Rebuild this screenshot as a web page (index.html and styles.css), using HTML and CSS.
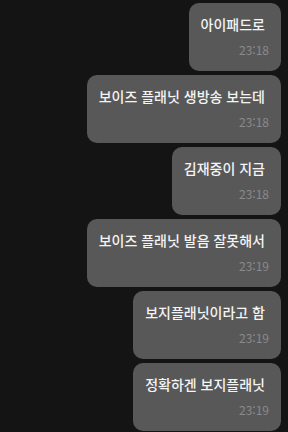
FILE: index.html
```html
<!DOCTYPE html>
<html lang="ko">
<head>
    <meta charset="UTF-8">
    <title>채팅</title>

    <link rel="stylesheet" href="styles.css">
</head>
<body>
<div id="chat">
    <div class="bubble">
        <div class="msg">아이패드로</div>
        <div class="time">23:18</div>
    </div>
    <div class="bubble">
        <div class="msg">보이즈 플래닛 생방송 보는데</div>
        <div class="time">23:18</div>
    </div>
    <div class="bubble">
        <div class="msg">김재중이 지금</div>
        <div class="time">23:18</div>
    </div>
    <div class="bubble">
        <div class="msg">보이즈 플래닛 발음 잘못해서</div>
        <div class="time">23:19</div>
    </div>
    <div class="bubble">
        <div class="msg">보지플래닛이라고 함</div>
        <div class="time">23:19</div>
    </div>
    <div class="bubble">
        <div class="msg">정확하겐 보지플래닛</div>
        <div class="time">23:19</div>
    </div>
</div>
</body>
</html>
```
FILE: styles.css
```css
* {
    margin: 0;
    padding: 0;
    box-sizing: border-box;
}

body {
    background: #141414;
    font-family: "Noto Sans CJK KR", "Noto Sans", sans-serif;
}

#chat {
    display: flex;
    flex-direction: column;
    align-items: flex-end;
    gap: 4px;
    padding: 3px 7px;
}

.bubble {
    background: #585858;
    border-radius: 10px;
    height: 68px;
    padding: 11px 16px 0 12px;
}

.msg {
    color: #f4f4f4;
    font-size: 14px;
    font-weight: 500;
    line-height: 20px;
    white-space: nowrap;
}

.time {
    color: #8a8a8a;
    font-size: 12px;
    line-height: 16px;
    margin-top: 8px;
    margin-right: -4px;
    text-align: right;
}
```
